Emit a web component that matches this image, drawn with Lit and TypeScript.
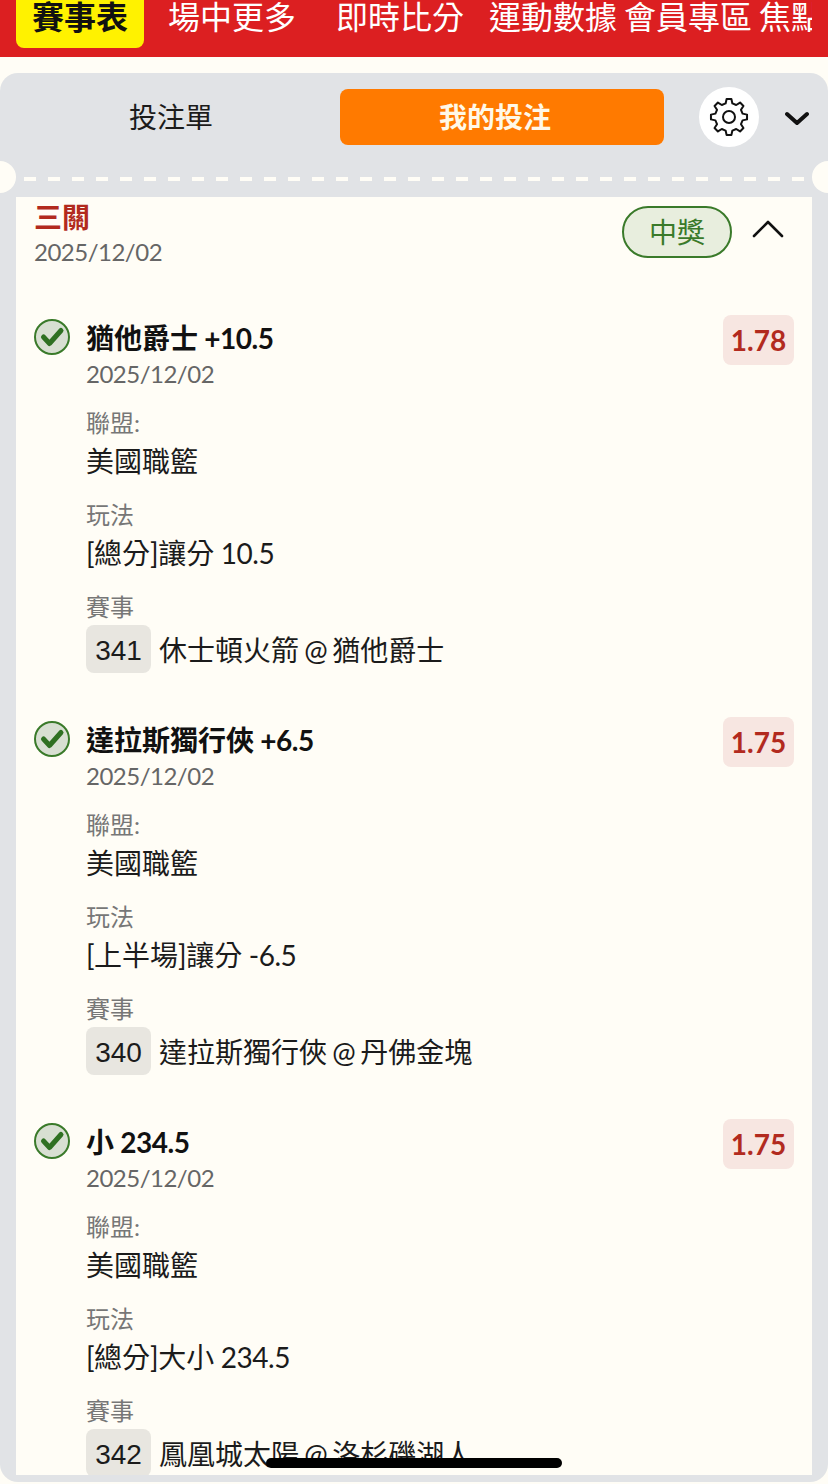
import { LitElement, html, css, svg } from "lit";
import { customElement } from "lit/decorators.js";

const gearPath = (() => {
  const c = 20, teeth = 8, ro = 18.2, ri = 14;
  const pts: string[] = [];
  const step = (Math.PI * 2) / teeth;
  for (let i = 0; i < teeth; i++) {
    const a = i * step - Math.PI / 2;
    const w = [[-0.5, ri], [-0.27, ro], [0.27, ro], [0.5, ri]] as const;
    for (const [f, r] of w) {
      const t = a + f * step * 0.62;
      pts.push(`${(c + r * Math.cos(t)).toFixed(2)} ${(c + r * Math.sin(t)).toFixed(2)}`);
    }
  }
  return "M" + pts.join("L") + "Z";
})();

const navItems = [
  { t: "場中更多", m: 24 },
  { t: "即時比分", m: 40 },
  { t: "運動數據", m: 25 },
  { t: "會員專區", m: 7 },
  { t: "焦點賽事", m: 7 },
];

const legs = [
  { title: "猶他爵士 +10.5", odds: "1.78", play: "[總分]讓分 10.5", num: "341", match: "休士頓火箭 @ 猶他爵士" },
  { title: "達拉斯獨行俠 +6.5", odds: "1.75", play: "[上半場]讓分 -6.5", num: "340", match: "達拉斯獨行俠 @ 丹佛金塊" },
  { title: "小 234.5", odds: "1.75", play: "[總分]大小 234.5", num: "342", match: "鳳凰城太陽 @ 洛杉磯湖人" },
];

/* Latin runs in the reference are slightly tighter than the CJK around them. */
const mixed = (s: string) =>
  s.split(/([\x00-\x7f]+)/).map((part, i) => (i % 2 ? html`<span class="lat">${part}</span>` : part));

@customElement("app-root")
export class AppRoot extends LitElement {
  static styles = css`
    :host {
      display: block;
      position: relative;
      width: 828px;
      height: 1484px;
      overflow: hidden;
      background: #fffdf6;
      font-family: Lato, "Noto Sans CJK TC", sans-serif;
      color: #111;
    }
    .lat { letter-spacing: -0.5px; }
    .nav {
      height: 57px;
      background: #dc1f21;
      padding: 0 16px;
      box-sizing: border-box;
    }
    .nav-in {
      display: flex;
      width: 796px;
      overflow: hidden;
      white-space: nowrap;
      font-size: 32px;
      line-height: 34px;
      color: #fff;
    }
    .nav-item { flex: none; }
    .nav-on {
      flex: none;
      width: 128px;
      height: 48px;
      background: #fff200;
      color: #111;
      font-weight: 700;
      text-align: center;
      border-radius: 0 0 8px 8px;
    }
    .panel {
      margin-top: 16px;
      height: 1409px;
      background: #e1e3e6;
      border-radius: 18px;
      position: relative;
      overflow: hidden;
      box-sizing: border-box;
      padding: 0 16px;
    }
    .tabs {
      height: 88px;
      display: flex;
      align-items: flex-start;
      margin: 0 -16px;
    }
    .tab-off {
      width: 340px;
      height: 56px;
      margin-top: 16px;
      padding-left: 2px;
      box-sizing: border-box;
      font-size: 28px;
      line-height: 56px;
      text-align: center;
      color: #1b1b1b;
      flex: none;
    }
    .tab-on {
      width: 324px;
      height: 56px;
      margin-top: 16px;
      padding-right: 14px;
      box-sizing: border-box;
      flex: none;
      background: #ff7a00;
      border-radius: 8px;
      color: #fff8e8;
      font-size: 28px;
      font-weight: 700;
      line-height: 56px;
      text-align: center;
    }
    .gear {
      width: 60px;
      height: 60px;
      margin: 14px 0 0 35px;
      flex: none;
      border-radius: 50%;
      background: #fff;
      display: flex;
      align-items: center;
      justify-content: center;
    }
    .caret { margin: 38px 0 0 26px; flex: none; display: block; }
    .perf {
      height: 36px;
      position: relative;
      display: flex;
      align-items: center;
      margin: 0 -16px;
      padding: 0 16px 0 24px;
    }
    .dash {
      flex: 1;
      height: 4px;
      background: repeating-linear-gradient(90deg, #fffdf6 0 12px, transparent 12px 24px);
    }
    .notch {
      position: absolute;
      top: 0;
      width: 32px;
      height: 32px;
      border-radius: 50%;
      background: #fffdf6;
    }
    .notch.l { left: -16px; }
    .notch.r { right: -16px; }
    .card {
      height: 1278px;
      background: #fffdf6;
      overflow: hidden;
      position: relative;
      padding: 0 18px;
    }
    .head { display: flex; align-items: flex-start; height: 118px; }
    .head-l { flex: 1; }
    .kind {
      font-size: 28px;
      line-height: 40px;
      font-weight: 700;
      color: #b22a1e;
    }
    .date {
      font-size: 24px;
      line-height: 22px;
      color: #666;
    }
    .head-l .date { line-height: 30px; }
    .pill {
      width: 110px;
      height: 52px;
      box-sizing: border-box;
      margin-top: 9px;
      border: 2px solid #3a7a2a;
      border-radius: 26px;
      background: #e8eede;
      color: #3a7a2a;
      font-size: 28px;
      line-height: 48px;
      text-align: center;
    }
    .up { display: block; margin: 21px 10px 0 20px; }
    .leg {
      display: flex;
      margin-bottom: 44px;
      height: 358px;
    }
    .chk { flex: none; width: 52px; }
    .chk svg { display: block; margin-top: 4px; }
    .body { flex: 1; min-width: 0; }
    .title {
      font-size: 28px;
      line-height: 46px;
      font-weight: 700;
    }
    .body .date { margin-top: 2px; }
    .label {
      font-size: 24px;
      line-height: 28px;
      color: #777;
      margin-top: 17px;
    }
    .label.first { margin-top: 24px; }
    .value {
      font-size: 28px;
      line-height: 46px;
      color: #1b1b1b;
      padding-top: 1px;
    }
    .match {
      display: flex;
      align-items: center;
      margin-top: 4px;
      font-size: 28px;
      color: #1b1b1b;
    }
    .match-t { word-spacing: -1.5px; }
    .num {
      width: 65px;
      height: 48px;
      border-radius: 8px;
      background: #e8e6e0;
      text-align: center;
      line-height: 52px;
      font-family: "Liberation Sans", sans-serif;
      margin-right: 8px;
      flex: none;
    }
    .odds {
      flex: none;
      width: 71px;
      height: 50px;
      border-radius: 8px;
      background: #f7e6e1;
      color: #b22a1e;
      font-size: 28px;
      font-weight: 700;
      line-height: 50px;
      text-align: center;
    }
    .home {
      position: absolute;
      left: 266px;
      top: 1458px;
      width: 296px;
      height: 10px;
      border-radius: 5px;
      background: #000;
    }
  `;

  render() {
    return html`
      <div class="nav">
        <div class="nav-in">
          <div class="nav-on">賽事表</div>
          ${navItems.map((n) => html`<div class="nav-item" style="margin-left:${n.m}px">${n.t}</div>`)}
        </div>
      </div>
      <div class="panel">
        <div class="tabs">
          <div class="tab-off">投注單</div>
          <div class="tab-on">我的投注</div>
          <div class="gear">
            <svg width="40" height="40" viewBox="0 0 40 40" fill="none" stroke="#111" stroke-width="2" stroke-linejoin="round">
              <path d=${gearPath}></path>
              <circle cx="20" cy="20" r="6"></circle>
            </svg>
          </div>
          <svg class="caret" width="24" height="16" viewBox="0 0 24 16" fill="none" stroke="#111" stroke-width="4" stroke-linecap="round" stroke-linejoin="round">
            <path d="M2 3l10 9 10-9"></path>
          </svg>
        </div>
        <div class="perf">
          <div class="notch l"></div>
          <div class="dash"></div>
          <div class="notch r"></div>
        </div>
        <div class="card">
          <div class="head">
            <div class="head-l">
              <div class="kind">三關</div>
              <div class="date">${mixed("2025/12/02")}</div>
            </div>
            <div class="pill">中獎</div>
            <svg class="up" width="32" height="20" viewBox="0 0 32 20" fill="none" stroke="#111" stroke-width="2.6" stroke-linecap="round" stroke-linejoin="round">
              <path d="M2 18L16 4l14 14"></path>
            </svg>
          </div>
          ${legs.map(
            (l) => html`
              <div class="leg">
                <div class="chk">
                  <svg width="36" height="36" viewBox="0 0 36 36">
                    <circle cx="18" cy="18" r="17" fill="#d8dfd2" stroke="#3a7a2a" stroke-width="2"></circle>
                    ${svg`<path d="M9.5 18l6 6.5L27 11.5" fill="none" stroke="#2f7022" stroke-width="5" stroke-linecap="round" stroke-linejoin="round"></path>`}
                  </svg>
                </div>
                <div class="body">
                  <div class="title">${mixed(l.title)}</div>
                  <div class="date">${mixed("2025/12/02")}</div>
                  <div class="label first">聯盟:</div>
                  <div class="value">美國職籃</div>
                  <div class="label">玩法</div>
                  <div class="value">${mixed(l.play)}</div>
                  <div class="label">賽事</div>
                  <div class="match"><span class="num">${l.num}</span><span class="match-t">${mixed(l.match)}</span></div>
                </div>
                <div class="odds">${l.odds}</div>
              </div>
            `
          )}
        </div>
      </div>
      <div class="home"></div>
    `;
  }
}
